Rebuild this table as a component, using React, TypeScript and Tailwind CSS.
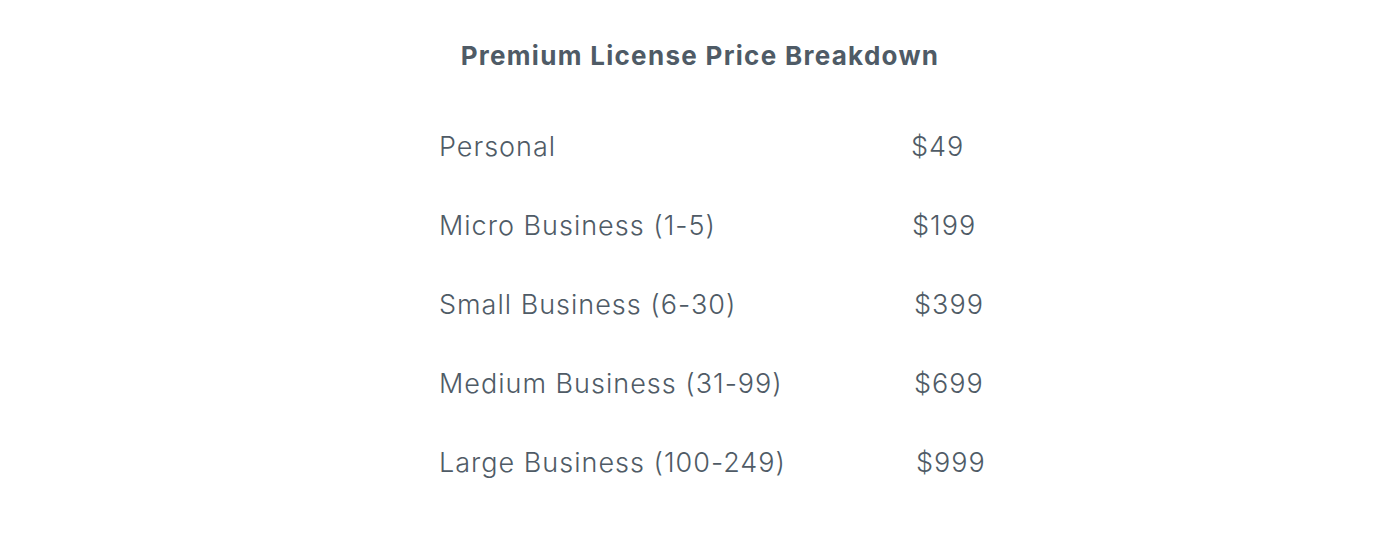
import React from 'react';

const rows = [
  { label: 'Personal', price: '$49', pl: 'pl-[472px]' },
  { label: 'Micro Business (1-5)', price: '$199', pl: 'pl-[473px]' },
  { label: 'Small Business (6-30)', price: '$399', pl: 'pl-[475px]' },
  { label: 'Medium Business (31-99)', price: '$699', pl: 'pl-[475px]' },
  { label: 'Large Business (100-249)', price: '$999', pl: 'pl-[477px]' },
];

const App: React.FC = () => {
  return (
    <div className="w-[1400px] h-[546px] bg-white text-[#4f5b66] font-['Inter',sans-serif]">
      <h1 className="pt-[36px] text-center text-[26px] leading-[40px] font-bold tracking-[1.3px]">Premium License Price Breakdown</h1>
      <div className="pt-[32px] pl-[439px] flex flex-col">
        {rows.map(r => (
          <div key={r.label} className="relative h-[79px] flex items-center text-[27px] font-light tracking-[1px]">
            <span className="absolute left-0">{r.label}</span>
            <span className={r.pl}>{r.price}</span>
          </div>
        ))}
      </div>
    </div>
  );
};

export default App;
